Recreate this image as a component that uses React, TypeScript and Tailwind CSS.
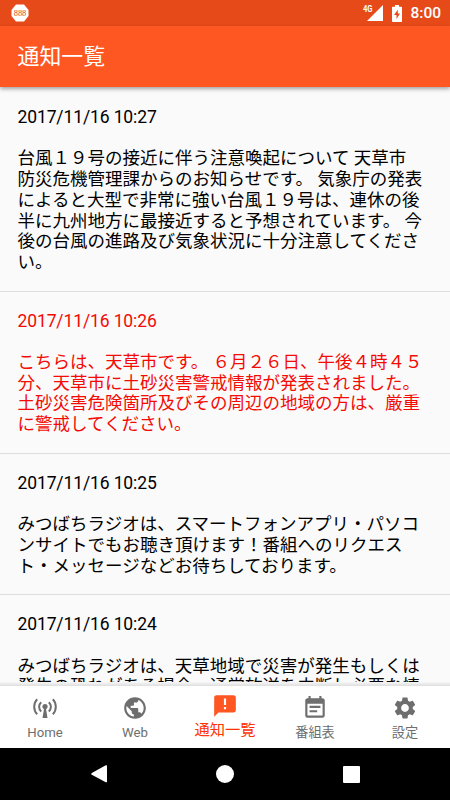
import React from "react";
import { MdAnnouncement, MdEventNote, MdPublic, MdSettings } from "react-icons/md";

type Notice = { date: string; lines: string[]; alert?: boolean };

const notices: Notice[] = [
  {
    date: "2017/11/16 10:27",
    lines: [
      "台風１９号の接近に伴う注意喚起について 天草市",
      "防災危機管理課からのお知らせです。 気象庁の発表",
      "によると大型で非常に強い台風１９号は、連休の後",
      "半に九州地方に最接近すると予想されています。 今",
      "後の台風の進路及び気象状況に十分注意してくださ",
      "い。",
    ],
  },
  {
    date: "2017/11/16 10:26",
    alert: true,
    lines: [
      "こちらは、天草市です。 ６月２６日、午後４時４５",
      "分、天草市に土砂災害警戒情報が発表されました。",
      "土砂災害危険箇所及びその周辺の地域の方は、厳重",
      "に警戒してください。",
    ],
  },
  {
    date: "2017/11/16 10:25",
    lines: [
      "みつばちラジオは、スマートフォンアプリ・パソコ",
      "ンサイトでもお聴き頂けます！番組へのリクエス",
      "ト・メッセージなどお待ちしております。",
    ],
  },
  {
    date: "2017/11/16 10:24",
    lines: [
      "みつばちラジオは、天草地域で災害が発生もしくは",
      "発生の恐れがある場合、通常放送を中断し必要な情",
    ],
  },
];

function AntennaIcon() {
  return (
    <svg width="26" height="26" viewBox="0 0 26 26" fill="none" stroke="currentColor" strokeWidth="2">
      <path d="M5.200 4.200C1.200 8 1.200 15.400 5.200 19.200M20.800 4.200C24.800 8 24.800 15.400 20.800 19.200" />
      <path d="M9.200 7.200C6.400 9.800 6.400 13.800 9.200 16.400M16.800 7.200C19.600 9.800 19.600 13.800 16.800 16.400" />
      <circle cx="13" cy="11.600" r="2.600" fill="currentColor" stroke="none" />
      <path d="M12.200 12.600h1.600l1.700 10.400h-5z" fill="currentColor" stroke="none" />
    </svg>
  );
}

function StatusBar() {
  return (
    <div className="flex h-[26px] shrink-0 items-center bg-[#e64a19] pl-[11px] pr-[9px] text-white">
      <svg width="18" height="18" viewBox="0 0 18 18">
        <path d="M5 .5h8L17.500 6v6L13 17.500H5L.5 12V6z" fill="white" />
        <text x="2.700" y="11.700" fontSize="8" fontFamily="Liberation Serif, serif" fill="#e64a19" textLength="12.600" lengthAdjust="spacingAndGlyphs">888</text>
      </svg>
      <svg className="ml-auto" width="20" height="18" viewBox="0 0 20 18" fill="white">
        <path d="M20 1v16H4z" />
        <path d="M0 0h10v9H0z" fill="#e64a19" />
        <text x="0" y="8.200" fontSize="9" fontWeight="700" fontFamily="Roboto, sans-serif" textLength="9.500" lengthAdjust="spacingAndGlyphs">4G</text>
      </svg>
      <svg className="ml-[9px]" width="10" height="17" viewBox="0 0 10 17">
        <path d="M3 0h4v1.700h2.200q.8 0 .8.800v13.700q0 .8-.8.800H.8q-.8 0-.8-.8V2.500q0-.8.800-.8H3z" fill="white" />
        <path d="M5.800 4.800 2 10h2.500v4L8 8.500H5.800z" fill="#e64a19" />
      </svg>
      <span className="ml-[8px] mt-[2px] text-[15.500px] font-medium leading-none">8:00</span>
    </div>
  );
}

function NavItem({ icon, label, active = false }: { icon: React.ReactNode; label: string; active?: boolean }) {
  return (
    <div className={active ? "flex flex-1 flex-col items-center pt-[7px] text-[#ff5722]" : "flex flex-1 flex-col items-center pt-[9px] text-[#6e6e6e]"}>
      <div className="flex h-[26px] items-center">{icon}</div>
      <span className={active ? "mt-[1px] whitespace-nowrap text-[15.300px] leading-[20px] text-[#ff3305]" : "mt-[4px] whitespace-nowrap text-[13.200px] leading-[16px]"}>{label}</span>
    </div>
  );
}

export default function App() {
  return (
    <div className="flex h-[800px] w-[450px] flex-col overflow-hidden bg-[#fafafa] font-[Roboto,'Noto_Sans_CJK_JP',sans-serif]">
      <StatusBar />
      <header className="z-10 flex h-[61px] shrink-0 items-center bg-[#ff5722] pl-[17.500px] pt-[1px] text-[21.900px] text-white shadow-[0_2px_4px_rgba(0,0,0,0.35)]">
        <h1 className="leading-[30px]">通知一覧</h1>
      </header>
      <main className="h-[595px] shrink-0 overflow-hidden pt-[1px]">
        {notices.map((notice) => (
          <article
            key={notice.date}
            className={
              notice.alert
                ? "border-b border-[#dedede] px-[17.500px] pb-[17.900px] pt-[19.100px] text-[17.500px] leading-[20.700px] text-[#f40b05]"
                : "border-b border-[#dedede] px-[17.500px] pb-[17.900px] pt-[19.100px] text-[17.500px] leading-[20.700px] text-black"
            }
          >
            <time className="block tracking-[-0.12px]">{notice.date}</time>
            <div className="mt-[20.700px]">
              {notice.lines.map((line) => (
                <p key={line} className="whitespace-nowrap">{line}</p>
              ))}
            </div>
          </article>
        ))}
      </main>
      <div className="h-[4px] shrink-0 bg-gradient-to-b from-[#f7f7f7] to-[#dedede]" />
      <nav className="flex h-[62px] shrink-0 bg-white">
        <NavItem icon={<AntennaIcon />} label="Home" />
        <NavItem icon={<MdPublic size={26} />} label="Web" />
        <NavItem icon={<MdAnnouncement size={26} />} label="通知一覧" active />
        <NavItem icon={<MdEventNote size={26} />} label="番組表" />
        <NavItem icon={<MdSettings size={26} />} label="設定" />
      </nav>
      <footer className="flex flex-1 items-center justify-center bg-black">
        <svg width="270" height="20" viewBox="0 0 270 20" fill="white">
          <path d="M15.800 1.300Q17 .8 17 2v15.500q0 1.200-1.200.7L1.800 10.800q-1.400-.8 0-1.700z" />
          <circle cx="135" cy="10" r="9" />
          <rect x="253" y="2" width="17" height="17" rx="1" />
        </svg>
      </footer>
    </div>
  );
}
